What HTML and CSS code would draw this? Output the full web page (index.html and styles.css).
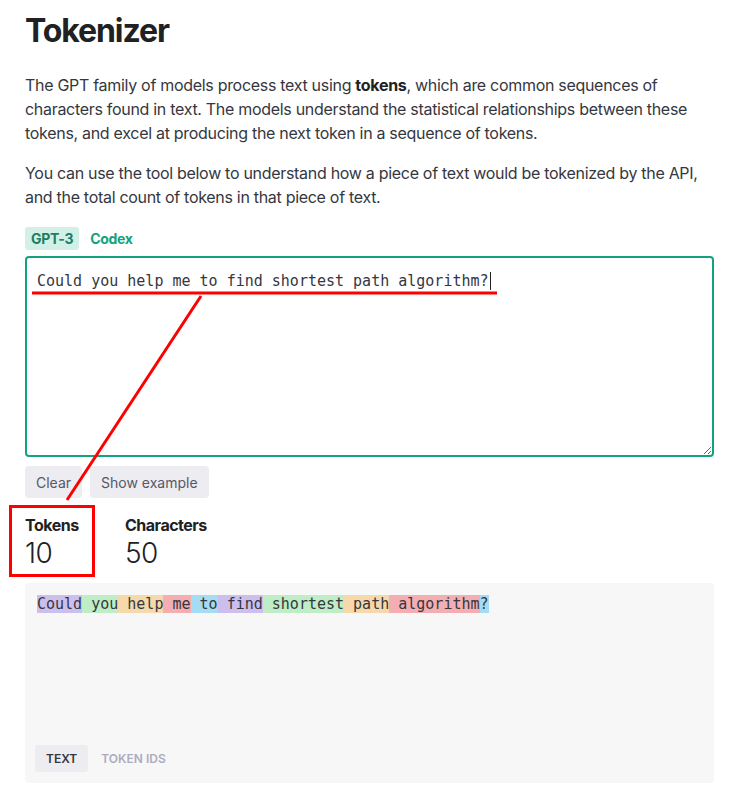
FILE: index.html
```html
<!DOCTYPE html>
<html lang="en">
<head>
<meta charset="utf-8">
<title>Tokenizer</title>
<link rel="stylesheet" href="styles.css">
</head>
<body>
<main class="page">
  <h1 class="title">Tokenizer</h1>
  <p class="text">The GPT family of models process text using <strong>tokens</strong>, which are common sequences of characters found in text. The models understand the statistical relationships between these tokens, and excel at producing the next token in a sequence of tokens.</p>
  <p class="text">You can use the tool below to understand how a piece of text would be tokenized by the API, and the total count of tokens in that piece of text.</p>

  <div class="tabs">
    <span class="tab tab-active">GPT-3</span>
    <span class="tab">Codex</span>
  </div>

  <div class="editor"><span class="caret-text">Could you help me to find shortest path algorithm?</span></div>

  <div class="actions">
    <button class="btn">Clear</button>
    <button class="btn">Show example</button>
  </div>

  <div class="stats">
    <div class="stat">
      <div class="stat-label">Tokens</div>
      <div class="stat-value">10</div>
    </div>
    <div class="stat">
      <div class="stat-label">Characters</div>
      <div class="stat-value">50</div>
    </div>
  </div>

  <div class="output">
    <div class="tokens"><span class="t t1">Could</span><span class="t t2"> you</span><span class="t t3"> help</span><span class="t t4"> me</span><span class="t t5"> to</span><span class="t t1"> find</span><span class="t t2"> shortest</span><span class="t t3"> path</span><span class="t t4"> algorithm</span><span class="t t5">?</span></div>
    <div class="out-tabs">
      <span class="out-tab out-tab-active">TEXT</span>
      <span class="out-tab">TOKEN IDS</span>
    </div>
  </div>

  <div class="mark-box"></div>
  <svg class="marks" width="746" height="791" viewBox="0 0 746 791">
    <line x1="32" y1="293" x2="497" y2="293" stroke="#f00" stroke-width="3"/>
    <line x1="201" y1="296" x2="67" y2="500" stroke="#f00" stroke-width="3"/>
  </svg>
</main>
</body>
</html>
```

FILE: styles.css
```css
html, body {
  margin: 0;
  padding: 0;
  background: #fff;
}

body {
  font-family: Inter, "Noto Sans", sans-serif;
  color: #353740;
  letter-spacing: -0.3px;
  overflow: hidden;
}

.page {
  width: 689px;
  padding: 11px 32px 0 25px;
}

.title {
  margin: 0;
  font-size: 32px;
  line-height: 40px;
  font-weight: 700;
  letter-spacing: -1.1px;
  color: #202123;
}

.text {
  margin: 22px 0 0;
  font-size: 16px;
  line-height: 24px;
}

.text + .text {
  margin-top: 16px;
}

.text strong {
  font-weight: 700;
  color: #202123;
}

.tabs {
  display: flex;
  gap: 5px;
  margin-top: 18px;
  height: 23px;
}

.tab {
  display: flex;
  align-items: center;
  padding: 0 6px 0 6px;
  border-radius: 3px;
  font-size: 14px;
  font-weight: 700;
  color: #10a37f;
}

.tab-active {
  background: #d2f0e6;
  color: #1a7f64;
}

.editor {
  margin-top: 6px;
  box-sizing: border-box;
  height: 201px;
  border: 2px solid #10a37f;
  border-radius: 4px;
  padding: 12px 10px;
  font-family: "DejaVu Sans Mono", "Liberation Mono", monospace;
  font-size: 15px;
  line-height: 22px;
  letter-spacing: 0;
  color: #353740;
  resize: vertical;
  overflow: auto;
}

.caret-text {
  border-right: 1px solid #202123;
  padding-right: 1px;
}

.actions {
  display: flex;
  gap: 8px;
  margin-top: 9px;
}

.btn {
  height: 32px;
  padding: 0 11px;
  border: none;
  border-radius: 4px;
  background: #ececf1;
  font-family: Inter, "Noto Sans", sans-serif;
  font-size: 14px;
  letter-spacing: 0;
  color: #565869;
}

.stats {
  display: flex;
  margin-top: 15px;
}

.stat {
  width: 100px;
}

.stat-label {
  font-size: 16px;
  line-height: 24px;
  font-weight: 700;
  letter-spacing: -0.5px;
  color: #202123;
}

.stat-value {
  font-size: 28px;
  line-height: 32px;
  font-weight: 300;
  letter-spacing: -0.5px;
  color: #202123;
}

.output {
  display: flex;
  flex-direction: column;
  margin-top: 14px;
  height: 200px;
  box-sizing: border-box;
  padding: 12px 12px 11px 10px;
  background: #f7f7f8;
  border-radius: 4px;
}

.tokens {
  padding-left: 2px;
  font-family: "DejaVu Sans Mono", "Liberation Mono", monospace;
  font-size: 15px;
  line-height: 18px;
  letter-spacing: 0;
  color: #353740;
  white-space: pre;
}

.t1 { background: rgba(107, 64, 216, 0.3); }
.t2 { background: rgba(104, 222, 122, 0.4); }
.t3 { background: rgba(244, 172, 54, 0.4); }
.t4 { background: rgba(239, 65, 70, 0.4); }
.t5 { background: rgba(39, 181, 234, 0.4); }

.out-tabs {
  display: flex;
  gap: 2px;
  margin-top: auto;
}

.out-tab {
  display: flex;
  align-items: center;
  height: 27px;
  padding: 0 11px;
  border-radius: 3px;
  font-size: 12px;
  font-weight: 600;
  letter-spacing: 0;
  color: #acacbe;
}

.out-tab-active {
  background: #ececf1;
  color: #353740;
}

.mark-box {
  position: absolute;
  left: 9px;
  top: 505px;
  width: 80px;
  height: 66px;
  border: 3px solid #f00;
}

.marks {
  position: absolute;
  left: 0;
  top: 0;
  pointer-events: none;
}
```
